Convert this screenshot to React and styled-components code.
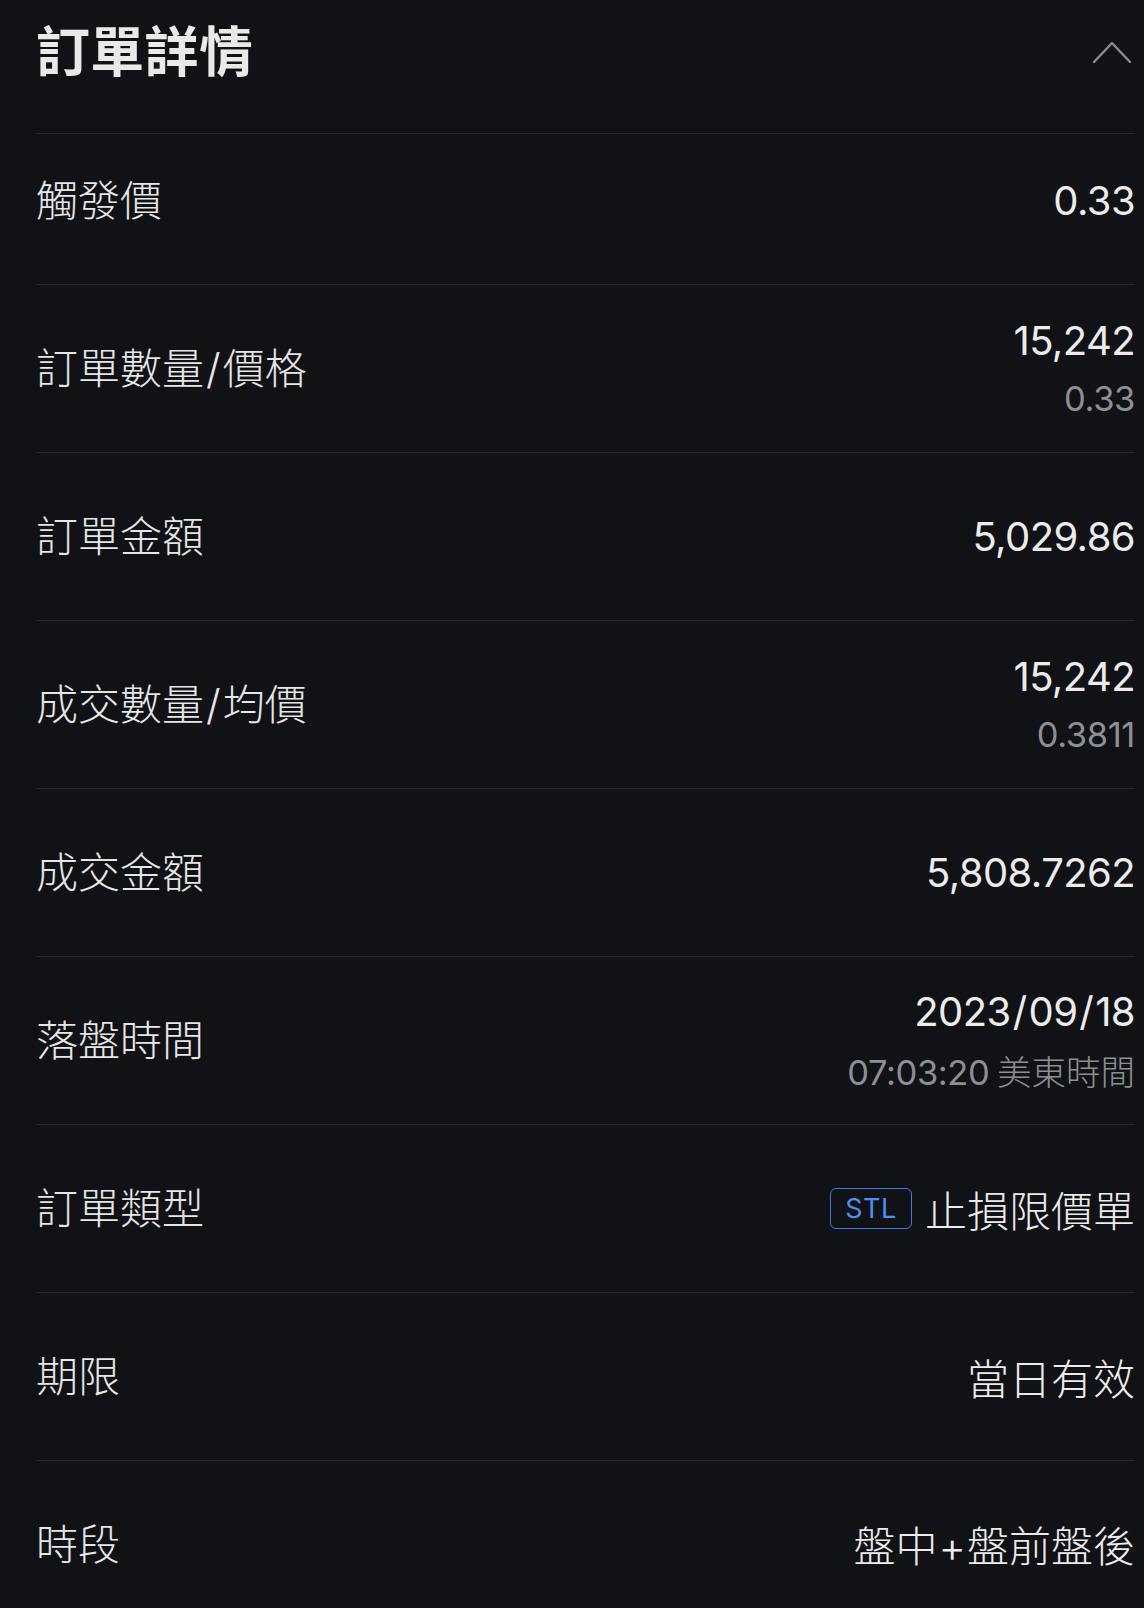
import React from 'react'
import styled, { createGlobalStyle } from 'styled-components'

const GlobalStyle = createGlobalStyle`
  html, body {
    margin: 0;
    padding: 0;
    background: #111215;
  }
  body {
    font-family: Inter, "Noto Sans CJK TC", "Noto Sans", sans-serif;
    -webkit-font-smoothing: antialiased;
  }
`;

const Page = styled.div`
  background: #111215;
  min-height: 1608px;
  padding: 0 9px 0 36px;
  color: #e8e8e9;
`;

const Header = styled.div`
  height: 134px;
  display: flex;
  align-items: flex-start;
  justify-content: space-between;
  border-bottom: 1.5px solid #26272b;
  box-sizing: border-box;
`;

const Title = styled.h1`
  margin: 0;
  padding-top: 17px;
  font-family: "Noto Sans CJK TC", sans-serif;
  font-size: 54px;
  font-weight: 700;
  line-height: 64px;
  color: #e9e9ea;
  letter-spacing: 0.3px;
`;

const Toggle = styled.div`
  padding-top: 40px;
  padding-right: 3px;
  display: flex;
`;

const Row = styled.div`
  display: flex;
  align-items: center;
  justify-content: space-between;
  box-sizing: border-box;
  height: ${props => props.$first ? '151px' : '168px'};
  padding-bottom: ${props => props.$first ? '17px' : '0'};
  border-bottom: ${props => props.$last ? 'none' : '1.5px solid #26272b'};
  flex-shrink: 0;
`;

const Label = styled.div`
  font-family: Inter, "Noto Sans CJK TC", sans-serif;
  font-size: 42px;
  font-weight: 300;
  line-height: 50px;
  color: #e6e6e7;
`;

const Value = styled.div`
  display: flex;
  flex-direction: column;
  align-items: flex-end;
  gap: 11px;
`;

const Main = styled.div`
  display: flex;
  align-items: center;
  font-family: Inter, "Noto Sans CJK TC", sans-serif;
  font-size: 40px;
  line-height: 50px;
  color: #ececed;
  letter-spacing: -0.6px;
`;

const Sub = styled.div`
  font-family: Inter, "Noto Sans CJK TC", sans-serif;
  font-size: 34.5px;
  line-height: 44px;
  color: #8e8f92;
  letter-spacing: -0.4px;
`;

const Cjk = styled.span`
  font-family: "Noto Sans CJK TC", sans-serif;
  font-size: ${props => props.$size || '42px'};
  font-weight: 300;
  letter-spacing: 0;
`;

const Plus = styled.span`
  font-family: Inter, sans-serif;
  margin: 0 1px;
`;

const Slash = styled.span`
  margin: 0 2px;
`;

const Badge = styled.span`
  display: inline-flex;
  align-items: center;
  justify-content: center;
  box-sizing: border-box;
  width: 82px;
  height: 41px;
  margin-right: 13px;
  border: 1.5px solid #3b7de0;
  border-radius: 6px;
  color: #4d8ff2;
  font-family: Inter, sans-serif;
  font-size: 27px;
  letter-spacing: 0.5px;
`;

const rows = [
  { label: '觸發價', main: '0.33' },
  { label: '訂單數量/價格', main: '15,242', sub: '0.33' },
  { label: '訂單金額', main: '5,029.86' },
  { label: '成交數量/均價', main: '15,242', sub: '0.3811' },
  { label: '成交金額', main: '5,808.7262' },
  { label: '落盤時間', main: '2023/09/18', sub: '07:03:20', subCjk: '美東時間' },
  { label: '訂單類型', badge: 'STL', cjk: '止損限價單' },
  { label: '期限', cjk: '當日有效' },
  { label: '時段', cjk: '盤中+盤前盤後' },
];

// widen slashes / plus signs a little, as in the original
function spaced(text) {
  return text.split(/([/+])/).map((part, i) => {
    if (part === '/') return <Slash key={i}>/</Slash>;
    if (part === '+') return <Plus key={i}>+</Plus>;
    return part;
  });
}

function Chevron() {
  return (
    <svg width="40" height="24" viewBox="0 0 40 24" fill="none">
      <path d="M2 22 L20 3 L38 22" stroke="#8a8b8e" strokeWidth="2.4" strokeLinecap="round" strokeLinejoin="round" />
    </svg>
  );
}

export default function App() {
  return (
    <>
      <GlobalStyle />
      <Page>
        <Header>
          <Title>訂單詳情</Title>
          <Toggle><Chevron /></Toggle>
        </Header>
        {rows.map((r, i) => (
          <Row key={r.label} $first={i === 0} $last={i === rows.length - 1}>
            <Label>{spaced(r.label)}</Label>
            <Value>
              <Main>
                {r.badge && <Badge>{r.badge}</Badge>}
                {r.main && spaced(r.main)}
                {r.cjk && <Cjk>{spaced(r.cjk)}</Cjk>}
              </Main>
              {r.sub && (
                <Sub>
                  {r.sub}
                  {r.subCjk && <Cjk $size="34.5px"> {r.subCjk}</Cjk>}
                </Sub>
              )}
            </Value>
          </Row>
        ))}
      </Page>
    </>
  );
}
